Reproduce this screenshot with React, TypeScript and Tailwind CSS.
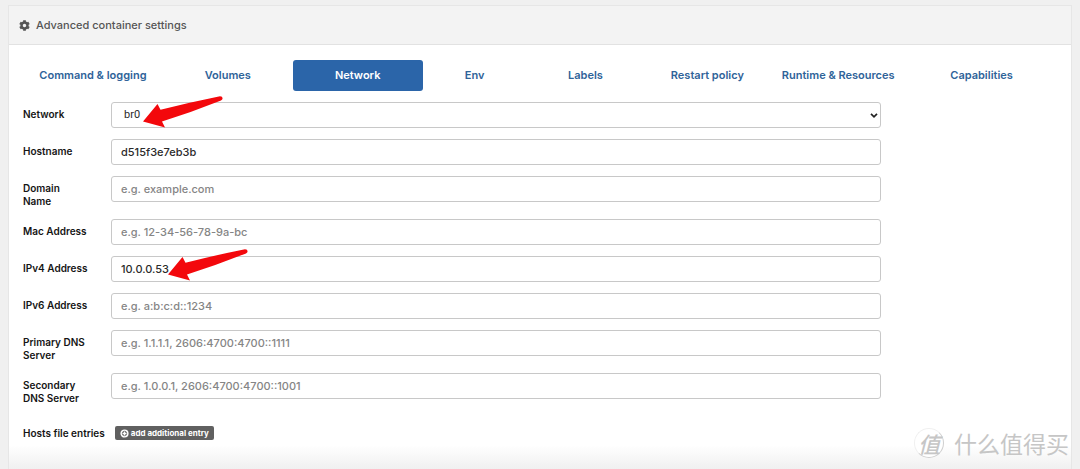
import { useState } from 'react';
import { FaCog } from 'react-icons/fa';

type FieldData = {
  id: string;
  label: string;
  placeholder?: string;
  value?: string;
  marked?: boolean;
};

const tabs = [
  'Command & logging',
  'Volumes',
  'Network',
  'Env',
  'Labels',
  'Restart policy',
  'Runtime & Resources',
  'Capabilities',
];

const fields: FieldData[] = [
  { id: 'hostname', label: 'Hostname', value: 'd515f3e7eb3b' },
  { id: 'domain', label: 'Domain\nName', placeholder: 'e.g. example.com' },
  { id: 'mac', label: 'Mac Address', placeholder: 'e.g. 12-34-56-78-9a-bc' },
  { id: 'ipv4', label: 'IPv4 Address', value: '10.0.0.53', marked: true },
  { id: 'ipv6', label: 'IPv6 Address', placeholder: 'e.g. a:b:c:d::1234' },
  { id: 'dns1', label: 'Primary DNS\nServer', placeholder: 'e.g. 1.1.1.1, 2606:4700:4700::1111' },
  { id: 'dns2', label: 'Secondary\nDNS Server', placeholder: 'e.g. 1.0.0.1, 2606:4700:4700::1001' },
];

const rowClass = 'grid grid-cols-[72px_minmax(0,1fr)] gap-x-4 items-start';
const labelClass =
  'pt-[6px] text-[10px] leading-[13px] font-semibold whitespace-pre-line text-[#151515]';
const controlClass =
  'block h-[26px] w-full rounded-[3px] border border-[#c8c8c8] bg-white text-[11px] text-[#2b2b2b] outline-none';

function Arrow({ className }: { className: string }) {
  return (
    <svg
      className={`pointer-events-none absolute ${className}`}
      width="80"
      height="32"
      viewBox="0 0 80 32"
      aria-hidden="true"
    >
      <path
        d="M0 25.5 L14.5 8 L17.5 13.8 Q48 6 77 .2 Q79.6 .2 79.6 2.2 Q79.6 3.6 78 4.4 Q49 16 19 25.4 L22 31.6 Z"
        fill="#f3080c"
      />
    </svg>
  );
}

function Field({ field }: { field: FieldData }) {
  return (
    <div className={rowClass}>
      <label htmlFor={field.id} className={labelClass}>
        {field.label}
      </label>
      <div className="relative">
        <input
          id={field.id}
          type="text"
          className={`${controlClass} px-[9px] font-medium placeholder:text-[#858585]`}
          defaultValue={field.value}
          placeholder={field.placeholder}
        />
        {field.marked && <Arrow className="top-[-7px] left-[57px]" />}
      </div>
    </div>
  );
}

function Watermark() {
  return (
    <div className="pointer-events-none absolute right-[11px] bottom-[11px] flex items-center gap-[10px] font-['Noto_Sans_CJK_SC',sans-serif] text-[#c6c6c6]">
      <span className="flex size-[30px] items-center justify-center rounded-full border border-t-[#f0f0f0] border-r-[#cfcfcf] border-b-[#cfcfcf] border-l-[#f0f0f0] bg-white text-[22px] leading-none font-medium italic">
        值
      </span>
      <span className="text-[23px] leading-[30px]">什么值得买</span>
    </div>
  );
}

export default function App() {
  const [active, setActive] = useState('Network');

  return (
    <div className="relative flex min-h-screen flex-col overflow-hidden bg-[#f0f0f0] px-2 pt-[5px] font-['Inter',sans-serif]">
      <section className="flex flex-1 flex-col border-x border-t border-[#e6e6e6] bg-white">
        <header className="flex h-[39px] items-center gap-[6px] border-b border-[#e2e2e2] bg-[#f3f3f3] px-[10px] text-[#555]">
          <FaCog className="size-[11px]" />
          <h1 className="text-[11px] font-medium">Advanced container settings</h1>
        </header>

        <div className="flex-1 bg-linear-to-t from-[#f0f0f0] to-white to-[24px] px-[14px] pt-[15px]">
          <nav className="grid grid-cols-[140fr_130fr_130fr_104fr_118fr_126fr_136fr_151fr]">
            {tabs.map((tab) => (
              <button
                key={tab}
                type="button"
                onClick={() => setActive(tab)}
                className={`h-[31px] rounded-[3px] text-[11px] font-semibold whitespace-nowrap ${
                  tab === active ? 'bg-[#2b65a9] text-white' : 'text-[#2f6399]'
                }`}
              >
                {tab}
              </button>
            ))}
          </nav>

          <form className="mt-[11px] flex w-[83%] flex-col gap-[11px]">
            <div className={rowClass}>
              <label htmlFor="network" className={labelClass}>
                Network
              </label>
              <div className="relative">
                <select
                  id="network"
                  className={`${controlClass} appearance-none px-3 font-['Roboto',sans-serif]`}
                >
                  <option>br0</option>
                </select>
                <svg
                  className="pointer-events-none absolute top-[11px] right-[3px]"
                  width="8"
                  height="5"
                  viewBox="0 0 8 5"
                  aria-hidden="true"
                >
                  <path d="M1 .8 L4 3.8 L7 .8" fill="none" stroke="#222" strokeWidth="1.7" />
                </svg>
                <Arrow className="top-[-6px] left-[32px]" />
              </div>
            </div>

            {fields.map((field) => (
              <Field key={field.id} field={field} />
            ))}

            <div className="flex items-center gap-[10px] pt-[10px]">
              <span className="text-[10px] leading-[13px] font-semibold text-[#151515]">
                Hosts file entries
              </span>
              <button
                type="button"
                className="flex h-[14px] items-center gap-[2px] rounded-[2px] bg-[#606060] px-[5px] text-[8px] font-bold text-white"
              >
                <svg width="9" height="9" viewBox="0 0 16 16" aria-hidden="true">
                  <circle cx="8" cy="8" r="6" fill="none" stroke="#fff" strokeWidth="2.6" />
                  <path d="M8 4.5v7M4.5 8h7" stroke="#fff" strokeWidth="2.4" />
                </svg>
                add additional entry
              </button>
            </div>
          </form>
        </div>
      </section>
      <Watermark />
    </div>
  );
}
